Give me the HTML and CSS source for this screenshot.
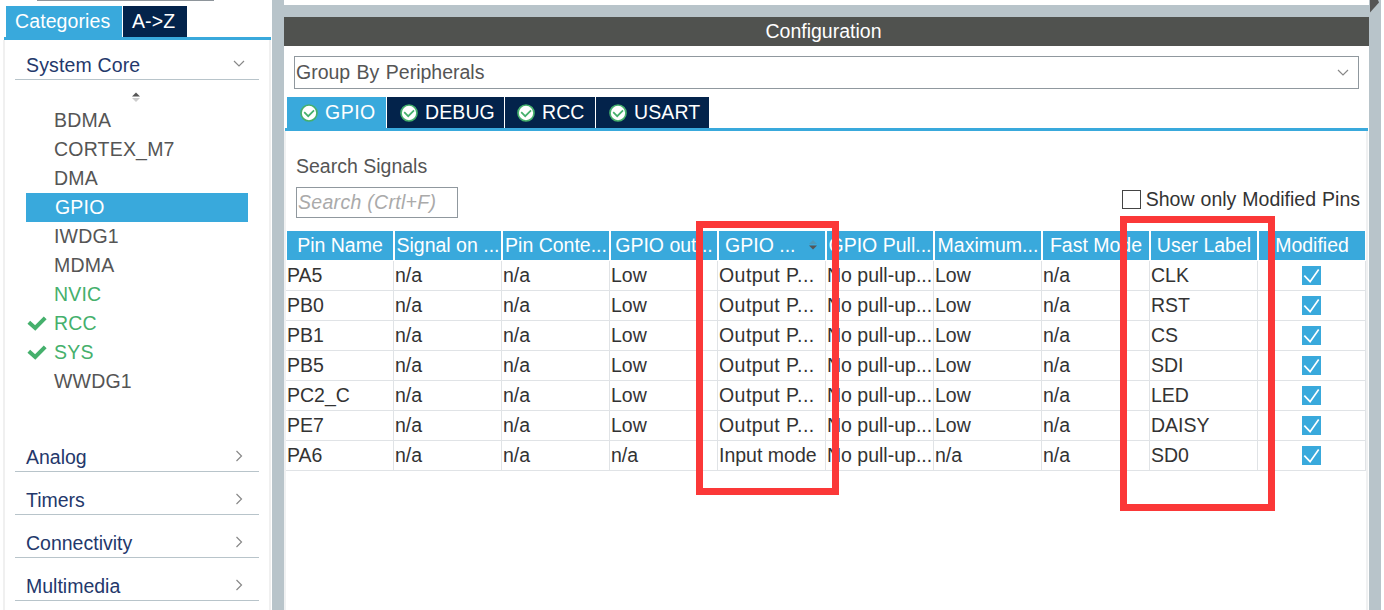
FILE: index.html
```
<!DOCTYPE html>
<html lang="en">
<head>
    <meta charset="UTF-8">
    <meta name="viewport" content="width=device-width, initial-scale=1.0">
    <title>Pinout &amp; Configuration</title>
    <link rel="stylesheet" href="styles.css">
</head>
<body>
    <!-- shared icons -->
    <svg class="defs" width="0" height="0">
        <symbol id="down" viewBox="0 0 12 7"><path d="M1 1l5 5 5-5" fill="none" stroke="#888" stroke-width="1.2"/></symbol>
        <symbol id="right" viewBox="0 0 8 12"><path d="M1.5 1l5 5-5 5" fill="none" stroke="#888" stroke-width="1.2"/></symbol>
        <symbol id="tick" viewBox="0 0 20 16"><path d="M1.8 7.3l6.4 5.7L18.2 2.8" fill="none" stroke="#45b06c" stroke-width="4"/></symbol>
        <symbol id="ok" viewBox="0 0 18 18">
            <circle cx="9" cy="9" r="8" fill="#fff" stroke="#45b06c" stroke-width="1.7"/>
            <path d="M4.2 8.2l4 4 5.8-5.8" fill="none" stroke="#45b06c" stroke-width="1.7"/>
        </symbol>
        <symbol id="checked" viewBox="0 0 19 19">
            <path d="M0 0h19v19H0z" fill="#39a9dc"/>
            <path d="M2.3 9.7l5.8 6 8.6-12.2" fill="none" stroke="#fff" stroke-width="1.7"/>
        </symbol>
    </svg>

    <div class="sidebar">
        <div class="sidebarTop"></div>
        <div class="tabs sideTabs">
            <div class="tab active">Categories</div>
            <div class="tab">A-&gt;Z</div>
        </div>
        <div class="categories">
            <div class="category">System Core <svg class="down"><use href="#down"/></svg></div>
            <div class="coreList">
                <svg class="sorter" viewBox="0 0 8 10"><path d="M0 4.5l4-4 4 4z" fill="#555"/><path d="M0 6h8l-4 4z" fill="#ccc"/></svg>
                <ul>
                    <li>BDMA</li>
                    <li>CORTEX_M7</li>
                    <li>DMA</li>
                    <li class="selected">GPIO</li>
                    <li>IWDG1</li>
                    <li>MDMA</li>
                    <li class="enabled">NVIC</li>
                    <li class="enabled"><svg class="tick"><use href="#tick"/></svg>RCC</li>
                    <li class="enabled"><svg class="tick"><use href="#tick"/></svg>SYS</li>
                    <li>WWDG1</li>
                </ul>
            </div>
            <div class="category">Analog <svg class="right"><use href="#right"/></svg></div>
            <div class="category">Timers <svg class="right"><use href="#right"/></svg></div>
            <div class="category">Connectivity <svg class="right"><use href="#right"/></svg></div>
            <div class="category">Multimedia <svg class="right"><use href="#right"/></svg></div>
        </div>
    </div>

    <div class="splitter"></div>

    <div class="main">
        <div class="topBar"></div>
        <div class="title">Configuration</div>
        <div class="groupBy">Group By Peripherals <svg class="down"><use href="#down"/></svg></div>
        <div class="tabs pinTabs">
            <div class="tab active"><svg class="ok"><use href="#ok"/></svg>GPIO</div>
            <div class="tab"><svg class="ok"><use href="#ok"/></svg>DEBUG</div>
            <div class="tab"><svg class="ok"><use href="#ok"/></svg>RCC</div>
            <div class="tab"><svg class="ok"><use href="#ok"/></svg>USART</div>
        </div>
        <div class="panel">
            <div class="filters">
                <div class="search">
                    <label for="search">Search Signals</label>
                    <input type="text" id="search" placeholder="Search (Crtl+F)">
                </div>
                <div class="onlyModified"><span class="box"></span>Show only Modified Pins</div>
            </div>
            <table>
                <thead>
                    <tr>
                        <th>Pin Name</th>
                        <th>Signal on ...</th>
                        <th>Pin Conte...</th>
                        <th>GPIO out...</th>
                        <th class="sorted">GPIO ... <svg class="sorter" viewBox="0 0 8 10"><path d="M0 4l4-4 4 4z" fill="#4b9abb"/><path d="M0 5.5h8l-4 4z" fill="#555"/></svg></th>
                        <th>GPIO Pull...</th>
                        <th>Maximum...</th>
                        <th>Fast Mode</th>
                        <th>User Label</th>
                        <th>Modified</th>
                    </tr>
                </thead>
                <tbody>
                    <tr><td>PA5</td><td>n/a</td><td>n/a</td><td>Low</td><td class="output">Output P...</td><td>No pull-up...</td><td>Low</td><td>n/a</td><td>CLK</td><td><svg class="checked"><use href="#checked"/></svg></td></tr>
                    <tr><td>PB0</td><td>n/a</td><td>n/a</td><td>Low</td><td class="output">Output P...</td><td>No pull-up...</td><td>Low</td><td>n/a</td><td>RST</td><td><svg class="checked"><use href="#checked"/></svg></td></tr>
                    <tr><td>PB1</td><td>n/a</td><td>n/a</td><td>Low</td><td class="output">Output P...</td><td>No pull-up...</td><td>Low</td><td>n/a</td><td>CS</td><td><svg class="checked"><use href="#checked"/></svg></td></tr>
                    <tr><td>PB5</td><td>n/a</td><td>n/a</td><td>Low</td><td class="output">Output P...</td><td>No pull-up...</td><td>Low</td><td>n/a</td><td>SDI</td><td><svg class="checked"><use href="#checked"/></svg></td></tr>
                    <tr><td>PC2_C</td><td>n/a</td><td>n/a</td><td>Low</td><td class="output">Output P...</td><td>No pull-up...</td><td>Low</td><td>n/a</td><td>LED</td><td><svg class="checked"><use href="#checked"/></svg></td></tr>
                    <tr><td>PE7</td><td>n/a</td><td>n/a</td><td>Low</td><td class="output">Output P...</td><td>No pull-up...</td><td>Low</td><td>n/a</td><td>DAISY</td><td><svg class="checked"><use href="#checked"/></svg></td></tr>
                    <tr><td>PA6</td><td>n/a</td><td>n/a</td><td>n/a</td><td>Input mode</td><td>No pull-up...</td><td>n/a</td><td>n/a</td><td>SD0</td><td><svg class="checked"><use href="#checked"/></svg></td></tr>
                </tbody>
            </table>
        </div>
    </div>

    <div class="splitter">
        <svg class="collapse" viewBox="0 0 11 13"><path d="M1 0h8l1 2.5L1 12.5z" fill="#555"/></svg>
    </div>

    <div class="mark markMode"></div>
    <div class="mark markLabel"></div>
</body>
</html>
```

FILE: styles.css
```
* {
    box-sizing: border-box;
}

body {
    position: relative;
    display: flex;
    width: 1384px;
    height: 610px;
    margin: 0;
    overflow: hidden;
    background-color: #fff;
    color: #555;
    font: 19.5px/29px "Liberation Sans", Arial, sans-serif;
    white-space: nowrap;
}

svg {
    display: block;
    flex: none;
}

.defs {
    position: absolute;
}

.down {
    width: 12px;
    height: 7px;
}

.right {
    width: 8px;
    height: 12px;
}

.sorter {
    width: 8px;
    height: 10px;
}

.ok {
    width: 18px;
    height: 18px;
    margin: 0 7px 0 0;
}

.checked {
    width: 19px;
    height: 19px;
    margin: 0 auto;
}

/* splitters between the panes */
.splitter {
    flex: none;
    width: 12px;
    background-color: #b8c4ca;
}

.collapse {
    width: 11px;
    height: 13px;
}

/* tabs */
.tabs {
    display: flex;
    gap: 1px;
    height: 34px;
    border-bottom: 3px solid #39a9dc;
}

.tab {
    display: flex;
    align-items: center;
    padding: 0 9px;
    background-color: #03234b;
    color: #fff;
    letter-spacing: 0.1px;
}

.tab.active {
    background-color: #39a9dc;
}

/* left side */
.sidebar {
    flex: none;
    display: flex;
    flex-direction: column;
    width: 272px;
    padding: 0 1px 0 3px;
}

.sidebarTop {
    width: 177px;
    height: 6px;
    margin-left: 34px;
    border-top: 1px solid #8e959b;
}

.sideTabs {
    margin-left: 1px;
    padding-left: 2px;
}

.sideTabs .active {
    width: 116px;
}

.sideTabs .tab:last-child {
    width: 64px;
}

.categories {
    flex: 1;
    padding: 0 10px;
    border: solid #f0f0f0;
    border-width: 0 2px;
}

.category {
    display: flex;
    align-items: center;
    justify-content: space-between;
    width: 244px;
    height: 43px;
    padding: 15px 14px 0 11px;
    border-bottom: 1px solid #b8c4ca;
    color: #24386b;
}

.category:first-child {
    height: 40px;
    padding-top: 11px;
    letter-spacing: 0.15px;
}

.category .right {
    margin: 0 2px 4px 0;
}

.category .down {
    margin-bottom: 4px;
}

.coreList {
    height: 349px;
    padding: 12px 11px 0;
}

.coreList .sorter {
    margin: 0 auto 4px 106px;
}

ul {
    margin: 0;
    padding: 0;
    list-style: none;
}

li {
    display: flex;
    align-items: center;
    height: 29px;
    padding-left: 28px;
    letter-spacing: 0.2px;
}

li.selected {
    padding-left: 29px;
    background-color: #39a9dc;
    color: #fff;
}

li.enabled {
    color: #45b06c;
}

.tick {
    width: 20px;
    height: 16px;
    margin: 0 7px 2px -27px;
}

/* configuration pane */
.main {
    flex: none;
    display: flex;
    flex-direction: column;
    width: 1085px;
}

.topBar {
    height: 17px;
    border-top: 5px solid #fff;
    background-color: #b8c4ca;
}

.title {
    height: 29px;
    padding-right: 6px;
    background-color: #50524f;
    color: #fff;
    text-align: center;
}

.groupBy {
    display: flex;
    align-items: center;
    justify-content: space-between;
    height: 33px;
    margin: 10px 10px 8px;
    padding: 0 9px 1px 1px;
    border: 1px solid #90989e;
    word-spacing: 1px;
}

.pinTabs {
    margin: 0 1px;
    padding-left: 2px;
}

.pinTabs .tab {
    padding: 0 0 0 13px;
}

.pinTabs .tab:nth-child(1) {
    width: 99px;
    letter-spacing: 0.5px;
}

.pinTabs .tab:nth-child(2) {
    width: 117px;
}

.pinTabs .tab:nth-child(3) {
    width: 90px;
    padding-left: 12px;
}

.pinTabs .tab:nth-child(4) {
    width: 113px;
    padding-left: 13px;
}

.panel {
    flex: 1;
    margin-right: 1px;
    border: solid #f0f1f2;
    border-width: 0 2px;
}

.filters {
    display: flex;
    align-items: flex-end;
    justify-content: space-between;
    height: 87px;
    margin-bottom: 13px;
    padding: 0 6px 0 10px;
}

.search {
    display: flex;
    flex-direction: column;
    gap: 6px;
}

.search input {
    width: 162px;
    height: 31px;
    padding: 0 1px;
    border: 1px solid #90989e;
    border-radius: 0;
    font: inherit;
    font-style: italic;
    letter-spacing: 0.3px;
}

.search input::placeholder {
    color: #aaa;
}

.onlyModified {
    display: flex;
    align-items: center;
    height: 29px;
    margin-bottom: 4px;
    color: #333;
    word-spacing: 0.6px;
}

.box {
    width: 19px;
    height: 19px;
    margin-right: 5px;
    border: 1px solid #444;
}

/* pin table */
table {
    width: 1080px;
    table-layout: fixed;
    border-spacing: 0;
    color: #333;
}

th,
td {
    height: 30px;
    padding: 0 0 1px;
    line-height: 27px;
    overflow: hidden;
}

th {
    border: solid #fff;
    border-width: 0 1px 1px;
    background-color: #39a9dc;
    color: #fff;
    font-weight: normal;
    text-align: center;
}

th.sorted {
    padding-right: 4px;
}

th.sorted .sorter {
    display: inline-block;
    margin-left: 8px;
    margin-right: -2px;
    vertical-align: 2px;
}

td {
    padding-left: 1px;
    border: solid #e0e3e6;
    border-width: 0 1px 1px 0;
}

td:last-child {
    padding: 0 1px 0 0;
}

td.output {
    letter-spacing: 0.45px;
}

/* highlight frames over the table */
.mark {
    position: absolute;
    border: 7px solid #fb3838;
}

.markMode {
    left: 696px;
    top: 221px;
    width: 143px;
    height: 274px;
}

.markLabel {
    left: 1120px;
    top: 216px;
    width: 155px;
    height: 295px;
}
```
